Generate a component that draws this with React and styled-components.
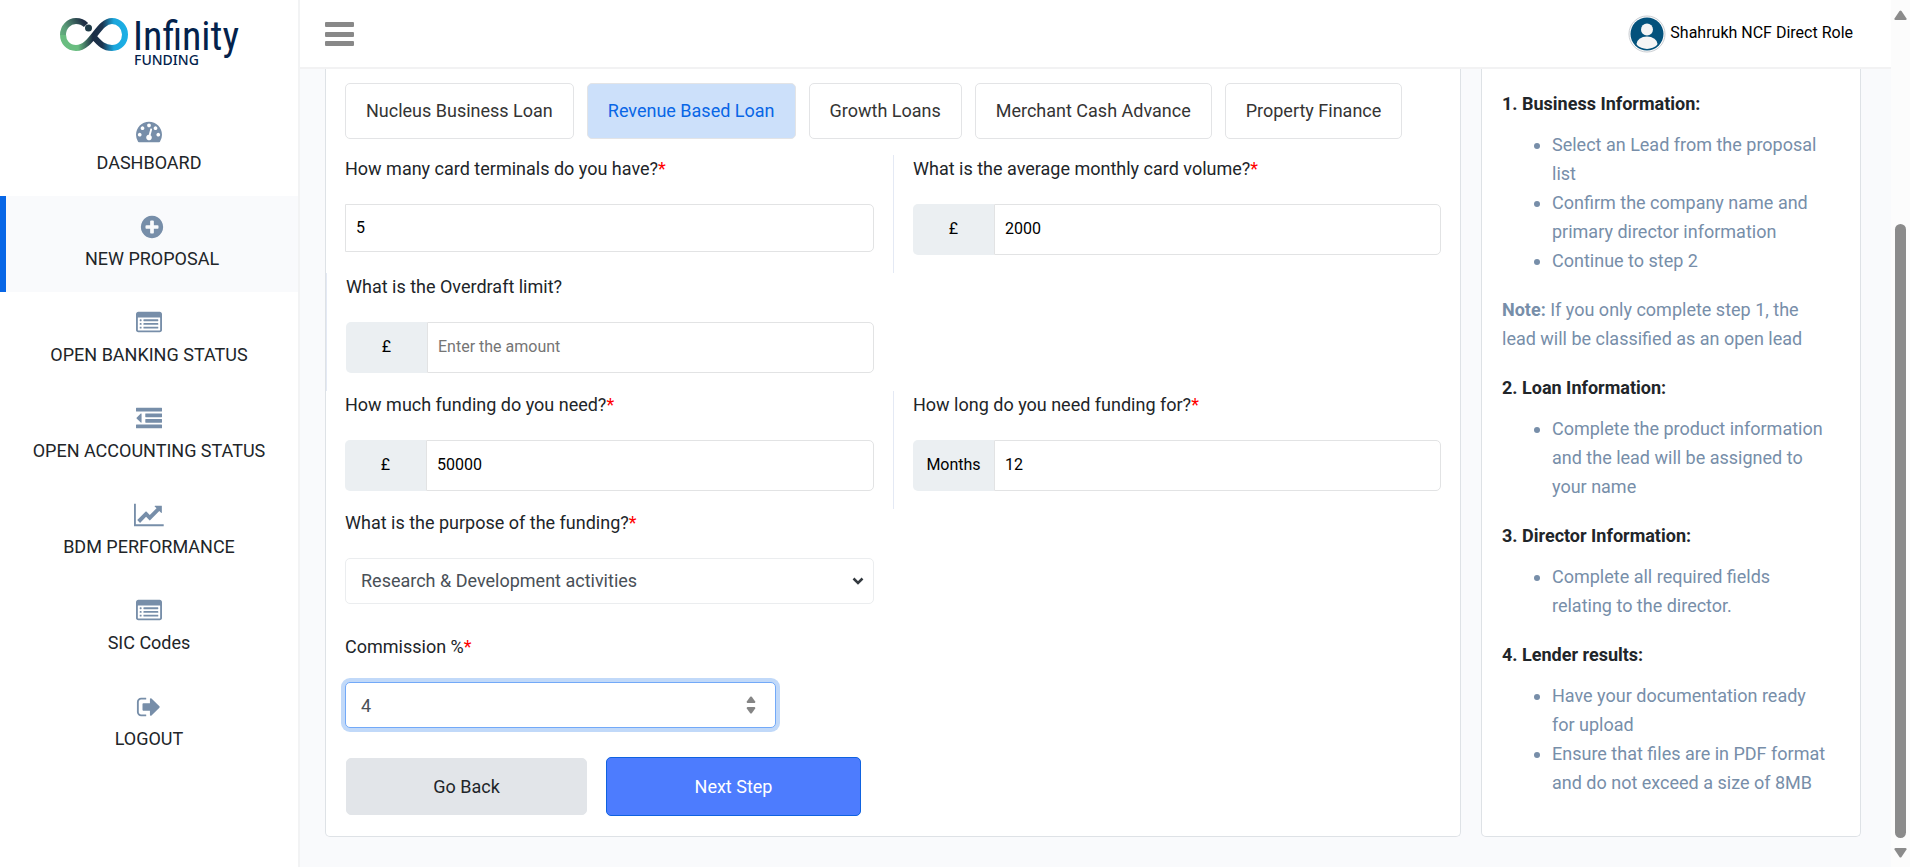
import React from "react";
import styled, { createGlobalStyle } from "styled-components";

const GlobalStyle = createGlobalStyle`
  *, *::before, *::after { box-sizing: border-box; }
  body {
    margin: 0;
    background: #f9fafc;
    color: #212529;
    font-family: Roboto, "Liberation Sans", sans-serif;
    font-size: 18px;
    line-height: 28px;
  }
  button, input, select { font: inherit; color: inherit; }
`;

const Page = styled.div`
  display: flex;
  min-height: 100vh;
`;

/* Sidebar */

const Sidebar = styled.aside`
  flex: 0 0 300px;
  border-right: 2px solid #f2f3f4;
  background: #fff;
`;

const LogoLink = styled.a`
  display: flex;
  justify-content: center;
  height: 100px;
  padding-top: 10px;
  color: #03224c;

  svg { width: 186px; height: 60px; overflow: visible; }
`;

const Wordmark = styled.text`
  fill: currentColor;
  font-family: "Roboto Condensed", "Liberation Sans Narrow", sans-serif;
  font-size: 40px;
  font-weight: 400;
`;

const Tagline = styled.text`
  fill: currentColor;
  font-family: "Noto Sans", "Open Sans", sans-serif;
  font-size: 14px;
  font-weight: 500;
`;

const Nav = styled.nav`
  display: flex;
  flex-direction: column;
`;

const NavItem = styled.a`
  display: flex;
  flex-direction: column;
  align-items: center;
  gap: 5px;
  height: 96px;
  padding-top: 18px;
  line-height: 27px;
  color: #212529;
  text-decoration: none;
  background: ${(p) => (p.$active ? "#f9fafc" : "transparent")};
  border-left: ${(p) => (p.$active ? "6px solid #0866e6" : "none")};
`;

const NavIcon = styled.svg`
  height: 26px;
  fill: #778ea9;
`;

/* Top bar */

const Main = styled.div`
  flex: 1;
  min-width: 0;
  display: flex;
  flex-direction: column;
`;

const TopBar = styled.header`
  display: flex;
  align-items: center;
  justify-content: space-between;
  height: 69px;
  padding: 0 38px 0 25px;
  background: #fff;
  border-bottom: 2px solid #f2f2f3;
`;

const MenuButton = styled.button`
  display: flex;
  padding: 0;
  border: 0;
  background: none;
  cursor: pointer;
`;

const User = styled.a`
  display: flex;
  align-items: center;
  gap: 4px;
  color: #000;
  font-size: 16px;
  line-height: 24px;
  text-decoration: none;

  span { padding-bottom: 2px; }
`;

const Avatar = styled.svg`
  width: 38px;
  height: 38px;
`;

/* Content */

const Content = styled.main`
  flex: 1;
  display: grid;
  grid-template-columns: minmax(0, 1fr) 380px;
  gap: 20px;
  padding: 0 30px 30px 25px;
`;

const Card = styled.section`
  background: #fff;
  border: 1px solid #dee2e6;
  border-top: 0;
  border-radius: 0 0 5px 5px;
`;

const FormCard = styled(Card).attrs({ as: "form" })`
  padding: 14px 0 19px;
`;

const Tabs = styled.div`
  display: flex;
  flex-wrap: wrap;
  gap: 13px;
  padding: 0 19px;
  margin-bottom: 16px;
`;

const Tab = styled.button`
  height: 56px;
  padding: 0 20px;
  border: 1px solid #e3e4e6;
  border-radius: 5px;
  background: ${(p) => (p.$active ? "#cce0fa" : "#fff")};
  color: ${(p) => (p.$active ? "#0866e6" : "#343434")};
  cursor: pointer;
`;

const Row = styled.div`
  display: grid;
  grid-template-columns: repeat(2, minmax(0, 1fr));
`;

const Cell = styled.div`
  padding: 0 19px;
  border-left: ${(p) => (p.$divided ? "1px solid #e4e9f4" : "none")};
  padding-bottom: ${(p) => (p.$loose ? "29px" : "18px")};
`;

const Label = styled.label`
  display: block;
  margin-bottom: 21px;
`;

const Required = styled.span`
  color: #f00;
`;

const Group = styled.div`
  display: flex;
  height: 51px;
`;

const Addon = styled.span`
  flex: 0 0 81px;
  display: flex;
  align-items: center;
  justify-content: center;
  padding-bottom: 2px;
  border-radius: 5px 0 0 5px;
  background: #ebeff2;
  color: #000;
  font-size: 16px;
`;

const TextInput = styled.input`
  flex: 1;
  width: 100%;
  min-width: 0;
  height: ${(p) => (p.$alone ? "48px" : "51px")};
  padding: 0 10px 2px;
  border: 1px solid #e2e3e4;
  border-radius: 0 5px 5px 0;
  background: #fff;
  color: #000;
  font-size: 16px;
  outline: none;

  &::placeholder { color: #757575; }
`;

const Control = styled.div`
  position: relative;
  width: ${(p) => (p.$narrow ? "calc(100% - 98px)" : "100%")};

  svg {
    position: absolute;
    top: 50%;
    right: ${(p) => (p.$narrow ? "20px" : "10px")};
    transform: translateY(-50%);
    pointer-events: none;
  }
`;

const Select = styled.select`
  appearance: none;
  display: block;
  width: 100%;
  height: 46px;
  padding: 0 30px 0 15px;
  border: 1px solid #ebedef;
  border-radius: 5px;
  background: #fff;
  color: #495057;
`;

const NumberInput = styled.input`
  appearance: textfield;
  display: block;
  width: 100%;
  height: 46px;
  padding: 0 40px 0 15px;
  border: 1px solid #72a9f8;
  border-radius: 5px;
  background: #fff;
  color: #495057;
  outline: none;
  box-shadow: 0 0 0 4px #c1d9f9;

  &::-webkit-inner-spin-button { appearance: none; }
`;

const Actions = styled.div`
  display: flex;
  align-items: center;
  gap: 19px;
  padding: 0 20px;
`;

const ActionButton = styled.button`
  width: ${(p) => (p.$primary ? "255px" : "241px")};
  height: ${(p) => (p.$primary ? "59px" : "57px")};
  border: 1px solid ${(p) => (p.$primary ? "#0f62e0" : "#e2e5e9")};
  border-radius: 5px;
  background: ${(p) => (p.$primary ? "#4d7cfe" : "#e2e5e9")};
  color: ${(p) => (p.$primary ? "#fff" : "#212529")};
  cursor: pointer;
`;

/* Help panel */

const HelpCard = styled(Card).attrs({ as: "aside" })`
  padding: 20px 28px 19px 20px;
  color: #778ea9;
  line-height: 29px;
`;

const HelpTitle = styled.h2`
  margin: 0 0 12px;
  color: #212529;
  font-size: 18px;
  font-weight: 700;
`;

const HelpList = styled.ul`
  margin: 0 0 20px;
  padding-left: 50px;
`;

const Note = styled.p`
  margin: 0 0 20px;

  strong { font-weight: 700; }
`;

/* Scroll rail */

const Rail = styled.div`
  position: sticky;
  top: 0;
  flex: 0 0 19px;
  height: 100vh;
  display: flex;
  flex-direction: column;
  align-items: center;
  gap: 10px;
  padding: 10px 0 9px;
  background: #fcfcfc;
`;

const RailTrack = styled.div`
  flex: 1;
  display: flex;
  flex-direction: column;
  justify-content: flex-end;
`;

const RailThumb = styled.div`
  width: 11px;
  height: 76%;
  border-radius: 6px;
  background: #8b8b8b;
`;

const listAlt =
  "M384 1184v64q0 13-9.500 22.500t-22.500 9.500h-64q-13 0-22.500-9.500t-9.500-22.500v-64q0-13 9.500-22.500t22.500-9.500h64q13 0 22.500 9.500t9.500 22.500zm0-256v64q0 13-9.500 22.500t-22.500 9.500h-64q-13 0-22.500-9.500t-9.500-22.500v-64q0-13 9.500-22.500t22.500-9.500h64q13 0 22.500 9.500t9.500 22.500zm0-256v64q0 13-9.500 22.500t-22.500 9.500h-64q-13 0-22.500-9.500t-9.500-22.500v-64q0-13 9.500-22.500t22.500-9.500h64q13 0 22.500 9.500t9.500 22.500zm1152 512v64q0 13-9.500 22.500t-22.500 9.500h-960q-13 0-22.500-9.500t-9.500-22.500v-64q0-13 9.500-22.500t22.500-9.500h960q13 0 22.500 9.500t9.500 22.500zm0-256v64q0 13-9.500 22.500t-22.500 9.500h-960q-13 0-22.500-9.500t-9.500-22.500v-64q0-13 9.500-22.500t22.500-9.500h960q13 0 22.500 9.500t9.500 22.500zm0-256v64q0 13-9.500 22.500t-22.500 9.500h-960q-13 0-22.500-9.500t-9.500-22.500v-64q0-13 9.500-22.500t22.500-9.500h960q13 0 22.500 9.500t9.500 22.500zm128 704v-832q0-13-9.500-22.500t-22.500-9.500h-1472q-13 0-22.500 9.500t-9.500 22.500v832q0 13 9.500 22.500t22.500 9.500h1472q13 0 22.500-9.500t9.500-22.500zm128-1088v1088q0 66-47 113t-113 47h-1472q-66 0-113-47t-47-113v-1088q0-66 47-113t113-47h1472q66 0 113 47t47 113z";

const navItems = [
  {
    label: "DASHBOARD",
    d: "M384 1152q0-53-37.500-90.500t-90.500-37.500-90.500 37.500-37.500 90.500 37.500 90.500 90.500 37.500 90.500-37.500 37.500-90.500zm192-448q0-53-37.500-90.500t-90.500-37.500-90.500 37.500-37.500 90.500 37.500 90.500 90.500 37.500 90.500-37.500 37.500-90.500zm428 481l101-382q6-26-7.500-48.500t-38.500-29.500-48 6.500-30 39.500l-101 382q-60 5-107 43.500t-63 98.500q-20 77 20 146t117 89 146-20 89-117q16-60-6-117t-72-91zm660-33q0-53-37.500-90.500t-90.500-37.500-90.500 37.500-37.500 90.500 37.500 90.500 90.500 37.500 90.500-37.500 37.500-90.500zm-640-640q0-53-37.500-90.500t-90.500-37.500-90.500 37.500-37.500 90.500 37.500 90.500 90.500 37.500 90.500-37.500 37.500-90.500zm448 192q0-53-37.500-90.500t-90.500-37.500-90.500 37.500-37.500 90.500 37.500 90.500 90.500 37.500 90.500-37.500 37.500-90.500zm320 448q0 261-141 483-19 29-54 29h-1402q-35 0-54-29-141-221-141-483 0-182 71-348t191-286 286-191 348-71 348 71 286 191 191 286 71 348z",
  },
  {
    label: "NEW PROPOSAL",
    active: true,
    d: "M1344 960v-128q0-26-19-45t-45-19h-256v-256q0-26-19-45t-45-19h-128q-26 0-45 19t-19 45v256h-256q-26 0-45 19t-19 45v128q0 26 19 45t45 19h256v256q0 26 19 45t45 19h128q26 0 45-19t19-45v-256h256q26 0 45-19t19-45zm320-64q0 209-103 385.500t-279.500 279.500-385.500 103-385.500-103-279.500-279.500-103-385.500 103-385.500 279.500-279.500 385.500-103 385.500 103 279.500 279.500 103 385.500z",
  },
  { label: "OPEN BANKING STATUS", d: listAlt },
  {
    label: "OPEN ACCOUNTING STATUS",
    d: "M384 544v576q0 13-9.500 22.500t-22.500 9.500q-14 0-23-9l-288-288q-9-9-9-23t9-23l288-288q9-9 23-9 13 0 22.500 9.500t9.500 22.500zm1408 768v192q0 13-9.500 22.500t-22.500 9.500h-1728q-13 0-22.500-9.500t-9.500-22.500v-192q0-13 9.500-22.500t22.500-9.500h1728q13 0 22.500 9.500t9.500 22.500zm0-384v192q0 13-9.500 22.500t-22.500 9.500h-1088q-13 0-22.500-9.500t-9.500-22.500v-192q0-13 9.500-22.500t22.500-9.500h1088q13 0 22.500 9.500t9.500 22.500zm0-384v192q0 13-9.500 22.500t-22.500 9.500h-1088q-13 0-22.500-9.500t-9.500-22.500v-192q0-13 9.500-22.500t22.500-9.500h1088q13 0 22.500 9.500t9.500 22.500zm0-384v192q0 13-9.500 22.500t-22.500 9.500h-1728q-13 0-22.500-9.500t-9.500-22.500v-192q0-13 9.500-22.500t22.500-9.500h1728q13 0 22.500 9.500t9.500 22.500z",
  },
  {
    label: "BDM PERFORMANCE",
    width: 2048,
    d: "M2048 1536v128h-2048v-1536h128v1408h1920zm-128-1248v435q0 21-19.500 29.500t-35.500-7.500l-121-121-633 633q-10 10-23 10t-23-10l-233-233-416 416-192-192 585-585q10-10 23-10t23 10l233 233 464-464-121-121q-16-16-7.500-35.500t29.500-19.500h435q14 0 23 9t9 23z",
  },
  { label: "SIC Codes", d: listAlt },
  {
    label: "LOGOUT",
    d: "M704 1440q0 4 1 20t.5 26.500-3 23.500-10 19.500-20.500 6.500h-320q-119 0-203.500-84.500t-84.500-203.500v-704q0-119 84.500-203.500t203.500-84.500h320q13 0 22.500 9.500t9.500 22.500q0 4 1 20t.5 26.500-3 23.500-10 19.500-20.500 6.500h-320q-66 0-113 47t-47 113v704q0 66 47 113t113 47h312l11.500 1 11.500 3 8 5.500 7 9 2 13.500zm928-544q0 26-19 45l-544 544q-19 19-45 19t-45-19-19-45v-288h-448q-26 0-45-19t-19-45v-384q0-26 19-45t45-19h448v-288q0-26 19-45t45-19 45 19l544 544q19 19 19 45z",
  },
];

const products = [
  "Nucleus Business Loan",
  "Revenue Based Loan",
  "Growth Loans",
  "Merchant Cash Advance",
  "Property Finance",
];

function Logo() {
  return (
    <LogoLink href="#" aria-label="Infinity Funding">
      <svg viewBox="0 0 186 60">
        <defs>
          <linearGradient id="loopLeft" x1="4" y1="36" x2="44" y2="14" gradientUnits="userSpaceOnUse">
            <stop offset="0" stopColor="#69bd80" />
            <stop offset="0.300" stopColor="#5a9c78" />
            <stop offset="0.700" stopColor="#1f2f45" />
          </linearGradient>
          <linearGradient id="loopRight" x1="8" y1="0" x2="72" y2="0" gradientUnits="userSpaceOnUse">
            <stop offset="0" stopColor="#69bd80" />
            <stop offset="0.220" stopColor="#69bd80" />
            <stop offset="0.450" stopColor="#1b2d45" />
            <stop offset="0.600" stopColor="#1c3550" />
            <stop offset="0.780" stopColor="#1ba6dc" />
            <stop offset="1" stopColor="#1cb0e6" />
          </linearGradient>
        </defs>
        <g fill="none" strokeWidth="6">
          <path d="M37 26C44 34 48 38 56 38C64 38 69 32 69 24.500C69 17 63 11 56 11C42 11 36 38 20 38C12 38 7 32 7 24.500" stroke="url(#loopRight)" />
          <path d="M7 25C7 17 13 11 20 11C25 11 28 13 30 15" stroke="url(#loopLeft)" />
        </g>
        <circle cx="32.500" cy="18" r="3.500" fill="#1f3b48" />
        <Wordmark x="77" y="40">Infinity</Wordmark>
        <Tagline x="78" y="55">FUNDING</Tagline>
      </svg>
    </LogoLink>
  );
}

function Field({ id, label, required, addon, divided, ...input }) {
  return (
    <Cell $divided={divided}>
      <Label htmlFor={id}>
        {label}
        {required && <Required>*</Required>}
      </Label>
      {addon ? (
        <Group>
          <Addon>{addon}</Addon>
          <TextInput id={id} type="text" {...input} />
        </Group>
      ) : (
        <TextInput id={id} type="text" $alone {...input} />
      )}
    </Cell>
  );
}

function Help({ title, items }) {
  return (
    <>
      <HelpTitle>{title}</HelpTitle>
      <HelpList>
        {items.map((item) => (
          <li key={item}>{item}</li>
        ))}
      </HelpList>
    </>
  );
}

export default function App() {
  return (
    <>
      <GlobalStyle />
      <Page>
        <Sidebar>
          <Logo />
          <Nav>
            {navItems.map(({ label, active, d, width = 1792 }) => (
              <NavItem key={label} href="#" $active={active}>
                <NavIcon viewBox={`0 0 ${width} 1792`} aria-hidden="true">
                  <path d={d} fillRule="evenodd" />
                </NavIcon>
                {label}
              </NavItem>
            ))}
          </Nav>
        </Sidebar>

        <Main>
          <TopBar>
            <MenuButton type="button" aria-label="Toggle menu">
              <svg width="29" height="24" viewBox="0 0 29 24" fill="#888">
                <rect width="29" height="5" rx="1" />
                <rect y="10" width="29" height="5" rx="1" />
                <rect y="19" width="29" height="5" rx="1" />
              </svg>
            </MenuButton>
            <User href="#">
              <Avatar viewBox="0 0 38 38" aria-hidden="true">
                <clipPath id="face">
                  <circle cx="19" cy="19" r="15" />
                </clipPath>
                <circle cx="19" cy="19" r="18" fill="#fff" stroke="#c9cdd2" />
                <circle cx="19" cy="19" r="16.500" fill="#04527c" />
                <circle cx="19" cy="14.500" r="6" fill="#f5f5f5" />
                <ellipse cx="19" cy="29" rx="10.500" ry="7.500" fill="#f5f5f5" clipPath="url(#face)" />
              </Avatar>
              <span>Shahrukh NCF Direct Role</span>
            </User>
          </TopBar>

          <Content>
            <FormCard>
              <Tabs>
                {products.map((name) => (
                  <Tab key={name} type="button" $active={name === "Revenue Based Loan"}>
                    {name}
                  </Tab>
                ))}
              </Tabs>
              <Row>
                <Field id="terminals" label="How many card terminals do you have?" required defaultValue="5" />
                <Field id="volume" label="What is the average monthly card volume?" required divided addon="£" defaultValue="2000" />
              </Row>
              <Row>
                <Field id="overdraft" label="What is the Overdraft limit?" divided addon="£" placeholder="Enter the amount" />
              </Row>
              <Row>
                <Field id="funding" label="How much funding do you need?" required addon="£" defaultValue="50000" />
                <Field id="term" label="How long do you need funding for?" required divided addon="Months" defaultValue="12" />
              </Row>
              <Row>
                <Cell $loose>
                  <Label htmlFor="purpose">
                    What is the purpose of the funding?<Required>*</Required>
                  </Label>
                  <Control>
                    <Select id="purpose" defaultValue="rd">
                      <option value="rd">Research &amp; Development activities</option>
                    </Select>
                    <svg width="12" height="8" viewBox="0 0 12 8" fill="none" stroke="#343a40" strokeWidth="2.500" aria-hidden="true">
                      <path d="M1.500 1.500L6 6L10.500 1.500" />
                    </svg>
                  </Control>
                </Cell>
              </Row>
              <Row>
                <Cell $loose>
                  <Label htmlFor="commission">
                    Commission %<Required>*</Required>
                  </Label>
                  <Control $narrow>
                    <NumberInput id="commission" type="number" defaultValue="4" />
                    <svg width="10" height="18" viewBox="0 0 10 18" fill="#858585" aria-hidden="true">
                      <path d="M4.200 .8Q5 0 5.800 .8L9.200 5.500Q9.500 7 8.500 7H1.500Q.5 7 .8 5.500Z" />
                      <path d="M4.200 17.200Q5 18 5.800 17.200L9.200 12.500Q9.500 11 8.500 11H1.500Q.5 11 .8 12.500Z" />
                    </svg>
                  </Control>
                </Cell>
              </Row>
              <Actions>
                <ActionButton type="button">Go Back</ActionButton>
                <ActionButton type="button" $primary>
                  Next Step
                </ActionButton>
              </Actions>
            </FormCard>

            <HelpCard>
              <Help
                title="1. Business Information:"
                items={[
                  "Select an Lead from the proposal list",
                  "Confirm the company name and primary director information",
                  "Continue to step 2",
                ]}
              />
              <Note>
                <strong>Note:</strong> If you only complete step 1, the lead will be classified as an open lead
              </Note>
              <Help
                title="2. Loan Information:"
                items={["Complete the product information and the lead will be assigned to your name"]}
              />
              <Help
                title="3. Director Information:"
                items={["Complete all required fields relating to the director."]}
              />
              <Help
                title="4. Lender results:"
                items={[
                  "Have your documentation ready for upload",
                  "Ensure that files are in PDF format and do not exceed a size of 8MB",
                ]}
              />
            </HelpCard>
          </Content>
        </Main>

        <Rail aria-hidden="true">
          <svg width="13" height="10" viewBox="0 0 13 10" fill="#8b8b8b">
            <path d="M5.500 1Q6.500 0 7.500 1L12.500 8.500Q13 10 11.500 10H1.500Q0 10 .5 8.500Z" />
          </svg>
          <RailTrack>
            <RailThumb />
          </RailTrack>
          <svg width="13" height="10" viewBox="0 0 13 10" fill="#8b8b8b">
            <path d="M5.500 9Q6.500 10 7.500 9L12.500 1.500Q13 0 11.500 0H1.500Q0 0 .5 1.500Z" />
          </svg>
        </Rail>
      </Page>
    </>
  );
}
